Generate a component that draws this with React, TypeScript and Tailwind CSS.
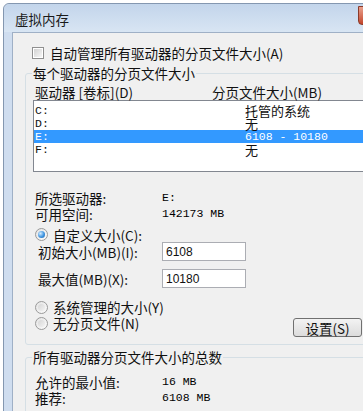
import React from "react";

const cjk = "font-['Noto_Sans_CJK_SC',sans-serif]";
const mono = "font-['Liberation_Mono',monospace]";

const Radio = ({ checked }: { checked?: boolean }) => (
    <span className="w-[13px] h-[13px] rounded-full border border-[#9a9a9a] bg-gradient-to-br from-[#e4e4e4] to-[#fbfbfb] flex items-center justify-center shrink-0">
        {checked ? (
            <span className="w-[7px] h-[7px] rounded-full bg-[radial-gradient(circle_at_35%_35%,#d4ecff,#3f95e0_55%,#1d5fa8)]" />
        ) : (
            <span className="w-[7px] h-[7px] rounded-full bg-gradient-to-br from-[#d6d6d6] to-[#f3f3f3]" />
        )}
    </span>
);

const drives = [
    { d: "C:", size: "托管的系统" },
    { d: "D:", size: "无" },
    { d: "E:", size: "6108 - 10180", selected: true },
    { d: "F:", size: "无" },
];

export default function App() {
    return (
        <div className={`w-[363px] h-[411px] overflow-hidden bg-white pt-[3px] pl-[3px] text-[#111] ${cjk}`}>
            <div className="w-[420px] border border-[#8497b0] rounded-t-[6px] bg-[#cfddef]">
                {/* title bar */}
                <div className="h-[28px] flex items-center bg-gradient-to-b from-[#c3d5eb] to-[#d8e5f3] rounded-t-[6px]">
                    <div className="w-[354px] pl-[11px] pt-[2px] text-[13.5px] leading-[16px] text-[#1a1a1a]">虚拟内存</div>
                    <div className="w-[43px] h-[19px] mt-[-6px] rounded-b-[4px] border border-[#8a3a2a] bg-gradient-to-b from-[#e8a08c] to-[#c2432a]" />
                </div>

                {/* client */}
                <div className="ml-[8px] h-[400px] border-t border-l border-[#9fb0c6] bg-[#f0f0f0] text-[13.5px] leading-[16px]">
                    <div className="mt-[12px] pl-[19px] h-[16px] flex items-center gap-[6px]">
                        <span className="w-[12px] h-[12px] border border-[#8f8f8f] bg-white p-[1px] shrink-0">
                            <span className="block w-full h-full bg-gradient-to-br from-[#d2d2d2] to-[#f6f6f6]" />
                        </span>
                        <span>自动管理所有驱动器的分页文件大小(A)</span>
                    </div>

                    <fieldset className="mt-[4px] ml-[12px] w-[380px] border border-[#d5dfe5] rounded-[3px] pb-[7px]">
                        <legend className="ml-[6px] px-[1px] leading-[16px]">每个驱动器的分页文件大小</legend>
                        <div className="mt-[3px] pl-[9px] flex h-[16px]">
                            <span className="w-[177px]">驱动器 [卷标](D)</span>
                            <span>分页文件大小(MB)</span>
                        </div>
                        <div className="ml-[7px] w-[340px] h-[72px] border border-[#828790] bg-white pt-[3px]">
                            {drives.map((r) => (
                                <div
                                    key={r.d}
                                    className={`h-[13px] flex items-center pl-[1px] ${r.selected ? "bg-[#3399ff] text-white" : ""}`}
                                >
                                    <span className={`w-[210px] text-[11.5px] leading-[13px] ${mono}`}>{r.d}</span>
                                    <span className={r.size[0] === "6" ? `${mono} text-[11.5px] leading-[13px]` : "text-[13px] leading-[13px]"}>
                                        {r.size}
                                    </span>
                                </div>
                            ))}
                        </div>

                        <div className="mt-[18px] pl-[9px]">
                            <div className="flex h-[16px] items-center">
                                <span className="w-[127px]">所选驱动器:</span>
                                <span className={`text-[11.5px] text-black ${mono}`}>E:</span>
                            </div>
                            <div className="flex h-[16px] items-center">
                                <span className="w-[127px]">可用空间:</span>
                                <span className={`text-[11.5px] text-black ${mono}`}>142173 MB</span>
                            </div>
                        </div>

                        <div className="mt-[5px] pl-[9px] h-[15px] flex items-center gap-[5px]">
                            <Radio checked />
                            <span>自定义大小(C):</span>
                        </div>
                        <div className="pl-[12px] h-[19px] flex items-center">
                            <span className="w-[124px]">初始大小(MB)(I):</span>
                            <div className="w-[84px] h-[19px] border border-[#abadb3] bg-white px-[3px] flex items-center text-[12px] font-['Liberation_Sans',sans-serif]">
                                6108
                            </div>
                        </div>
                        <div className="mt-[8px] pl-[12px] h-[19px] flex items-center">
                            <span className="w-[124px]">最大值(MB)(X):</span>
                            <div className="w-[84px] h-[19px] border border-[#abadb3] bg-white px-[3px] flex items-center text-[12px] font-['Liberation_Sans',sans-serif]">
                                10180
                            </div>
                        </div>

                        <div className="mt-[11px] pl-[9px] h-[16px] flex items-center gap-[5px]">
                            <Radio />
                            <span>系统管理的大小(Y)</span>
                        </div>
                        <div className="pl-[9px] flex items-start">
                            <div className="w-[258px] h-[16px] flex items-center gap-[5px]">
                                <Radio />
                                <span>无分页文件(N)</span>
                            </div>
                            <button className="mt-[3px] w-[69px] h-[19px] border border-[#707070] rounded-[3px] bg-gradient-to-b from-[#f3f3f3] to-[#dcdcdc] text-[13.5px] leading-[16px] flex items-center justify-center">
                                设置(S)
                            </button>
                        </div>
                    </fieldset>

                    <fieldset className="mt-[4px] ml-[12px] w-[380px] h-[80px] border border-[#d5dfe5] rounded-[3px]">
                        <legend className="ml-[6px] px-[1px] leading-[16px]">所有驱动器分页文件大小的总数</legend>
                        <div className="mt-[9px] pl-[9px]">
                            <div className="flex h-[16px] items-center">
                                <span className="w-[127px]">允许的最小值:</span>
                                <span className={`text-[11.5px] text-black ${mono}`}>16 MB</span>
                            </div>
                            <div className="flex h-[16px] items-center">
                                <span className="w-[127px]">推荐:</span>
                                <span className={`text-[11.5px] text-black ${mono}`}>6108 MB</span>
                            </div>
                        </div>
                    </fieldset>
                </div>
            </div>
        </div>
    );
}
